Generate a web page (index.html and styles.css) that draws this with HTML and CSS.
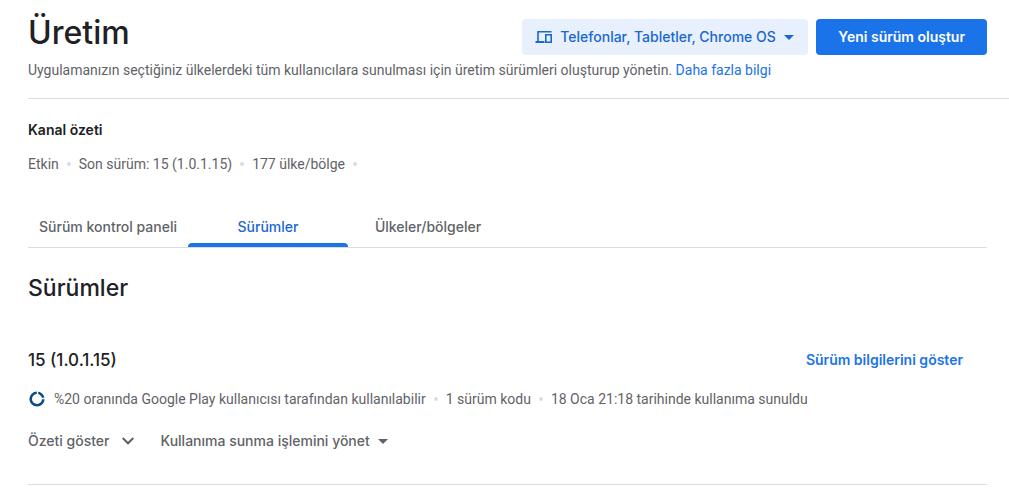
FILE: index.html
```html
<!DOCTYPE html>
<html lang="tr">
<head>
    <meta charset="UTF-8">
    <meta name="viewport" content="width=device-width, initial-scale=1.0">
    <title>Üretim</title>
    <link rel="stylesheet" href="styles.css">
</head>
<body>
    <header class="page-header">
        <div class="title-row">
            <h1>Üretim</h1>
            <div class="actions">
                <div class="device-picker">
                    <svg class="device-icon" viewBox="0 0 18 14" aria-hidden="true">
                        <path d="M16.500 1.800H3V11"/>
                        <path class="base" d="M.5 12h9"/>
                        <path d="M10.800 4.800h5.400v7.400h-5.400z"/>
                    </svg>
                    <select id="devices" aria-label="Cihaz türü">
                        <option>Telefonlar, Tabletler, Chrome OS</option>
                    </select>
                    <span class="caret"></span>
                </div>
                <button class="primary" type="button">Yeni sürüm oluştur</button>
            </div>
        </div>
        <p class="description">Uygulamanızın seçtiğiniz ülkelerdeki tüm kullanıcılara sunulması için üretim sürümleri oluşturup yönetin. <a href="#">Daha fazla bilgi</a></p>
    </header>

    <main>
        <section class="summary">
            <h3>Kanal özeti</h3>
            <ul class="facts">
                <li>Etkin</li>
                <li>Son sürüm: 15 (1.0.1.15)</li>
                <li>177 ülke/bölge</li>
                <li></li>
            </ul>
        </section>

        <nav class="tabs">
            <a href="#">Sürüm kontrol paneli</a>
            <a href="#" class="active">Sürümler</a>
            <a href="#">Ülkeler/bölgeler</a>
        </nav>

        <h2>Sürümler</h2>

        <article class="release">
            <div class="release-head">
                <h4>15 (1.0.1.15)</h4>
                <a href="#">Sürüm bilgilerini göster</a>
            </div>
            <div class="release-status">
                <svg class="progress-icon" viewBox="0 0 18 18" aria-hidden="true">
                    <circle cx="9" cy="9" r="6.300"/>
                    <path d="M9.500 0v5M13 8.500h5"/>
                </svg>
                <ul class="facts">
                    <li>%20 oranında Google Play kullanıcısı tarafından kullanılabilir</li>
                    <li>1 sürüm kodu</li>
                    <li>18 Oca 21:18 tarihinde kullanıma sunuldu</li>
                </ul>
            </div>
            <div class="release-actions">
                <button type="button">
                    Özeti göster
                    <svg class="chevron" viewBox="0 0 12 8" aria-hidden="true"><path d="M.7 1L6 6.300 11.300 1"/></svg>
                </button>
                <button type="button">Kullanıma sunma işlemini yönet <span class="caret"></span></button>
            </div>
        </article>
    </main>
</body>
</html>
```
FILE: styles.css
```css
* {
    box-sizing: border-box;
}

body {
    margin: 0;
    background-color: #fff;
    color: #5f6368;
    font: 14px/20px Roboto, sans-serif;
}

h1, h2, h3, h4, button, select, .tabs, .release-head {
    margin: 0;
    font-family: Inter, sans-serif;
    font-weight: 500;
}

h1, h2, h3, h4 {
    color: #202124;
}

h3, .primary, .release-head a {
    font-weight: 600;
}

a {
    color: #1a73e8;
    text-decoration: none;
}

button, select {
    border: 0;
    background: none;
    color: inherit;
    font-size: 14px;
    cursor: pointer;
}

.page-header {
    margin-left: 28px;
    padding: 13px 22px 18px 0;
    border-bottom: 1px solid #dadce0;
}

.title-row {
    display: flex;
    justify-content: space-between;
}

h1 {
    font-size: 32px;
    line-height: 40px;
}

.actions {
    display: flex;
    gap: 8px;
    padding-top: 6px;
}

.device-picker {
    position: relative;
    display: flex;
    align-items: center;
    color: #1967d2;
}

.device-picker select {
    height: 36px;
    padding: 0 32px 2px 38px;
    border-radius: 4px;
    background-color: #e8f0fe;
    appearance: none;
}

.device-icon {
    position: absolute;
    left: 13px;
    width: 18px;
    height: 14px;
    fill: none;
    stroke: #1967d2;
    stroke-width: 1.6;
    pointer-events: none;
}

.device-icon .base {
    stroke-width: 2;
}

.device-picker .caret {
    position: absolute;
    right: 14px;
    pointer-events: none;
}

.caret {
    border: 5px solid transparent;
    border-top-color: currentColor;
    border-bottom: 0;
}

.primary {
    height: 36px;
    padding: 0 22px 2px;
    border-radius: 4px;
    background-color: #1a73e8;
    color: #fff;
}

.description {
    margin: 5px 0 0;
}

main {
    margin: 0 22px 0 28px;
}

.summary {
    padding: 21px 0;
}

h3 {
    font-size: 14px;
    line-height: 20px;
}

.facts {
    display: flex;
    margin: 0;
    padding: 0;
    list-style: none;
}

.facts li {
    display: flex;
    align-items: center;
}

.facts li + li::before {
    content: "";
    width: 4px;
    height: 4px;
    margin: 0 8px;
    border-radius: 50%;
    background-color: #dadce0;
}

.summary .facts {
    margin-top: 14px;
}

.tabs {
    display: flex;
    margin-top: 12px;
    border-bottom: 1px solid #dadce0;
}

.tabs a {
    width: 160px;
    padding: 10px 0 6px;
    border-bottom: 4px solid transparent;
    color: #5f6368;
    text-align: center;
}

.tabs .active {
    position: relative;
    color: #1967d2;
}

.tabs .active::after {
    content: "";
    position: absolute;
    left: 0;
    right: 0;
    bottom: -4px;
    height: 4px;
    border-radius: 4px 4px 0 0;
    background-color: #1a73e8;
}

h2 {
    margin-top: 24px;
    font-size: 23px;
    line-height: 32px;
}

.release {
    margin-top: 44px;
    padding-bottom: 33px;
    border-bottom: 1px solid #dadce0;
}

.release-head {
    display: flex;
    justify-content: space-between;
    align-items: center;
    padding-right: 24px;
}

h4 {
    font-size: 17px;
    line-height: 24px;
}

.release-status {
    display: flex;
    align-items: center;
    gap: 8px;
    margin-top: 17px;
}

.progress-icon {
    width: 18px;
    height: 18px;
    fill: none;
}

.progress-icon circle {
    stroke: #0b4a82;
    stroke-width: 2.6;
}

.progress-icon path {
    stroke: #fff;
    stroke-width: 1.4;
}

.release-actions {
    display: flex;
    gap: 27px;
    margin-top: 22px;
}

.release-actions button {
    display: flex;
    align-items: center;
    gap: 8px;
    padding: 0;
    line-height: 20px;
}

.release-actions .chevron {
    width: 12px;
    height: 8px;
    margin-left: 4px;
    fill: none;
    stroke: #5f6368;
    stroke-width: 2;
}
```
